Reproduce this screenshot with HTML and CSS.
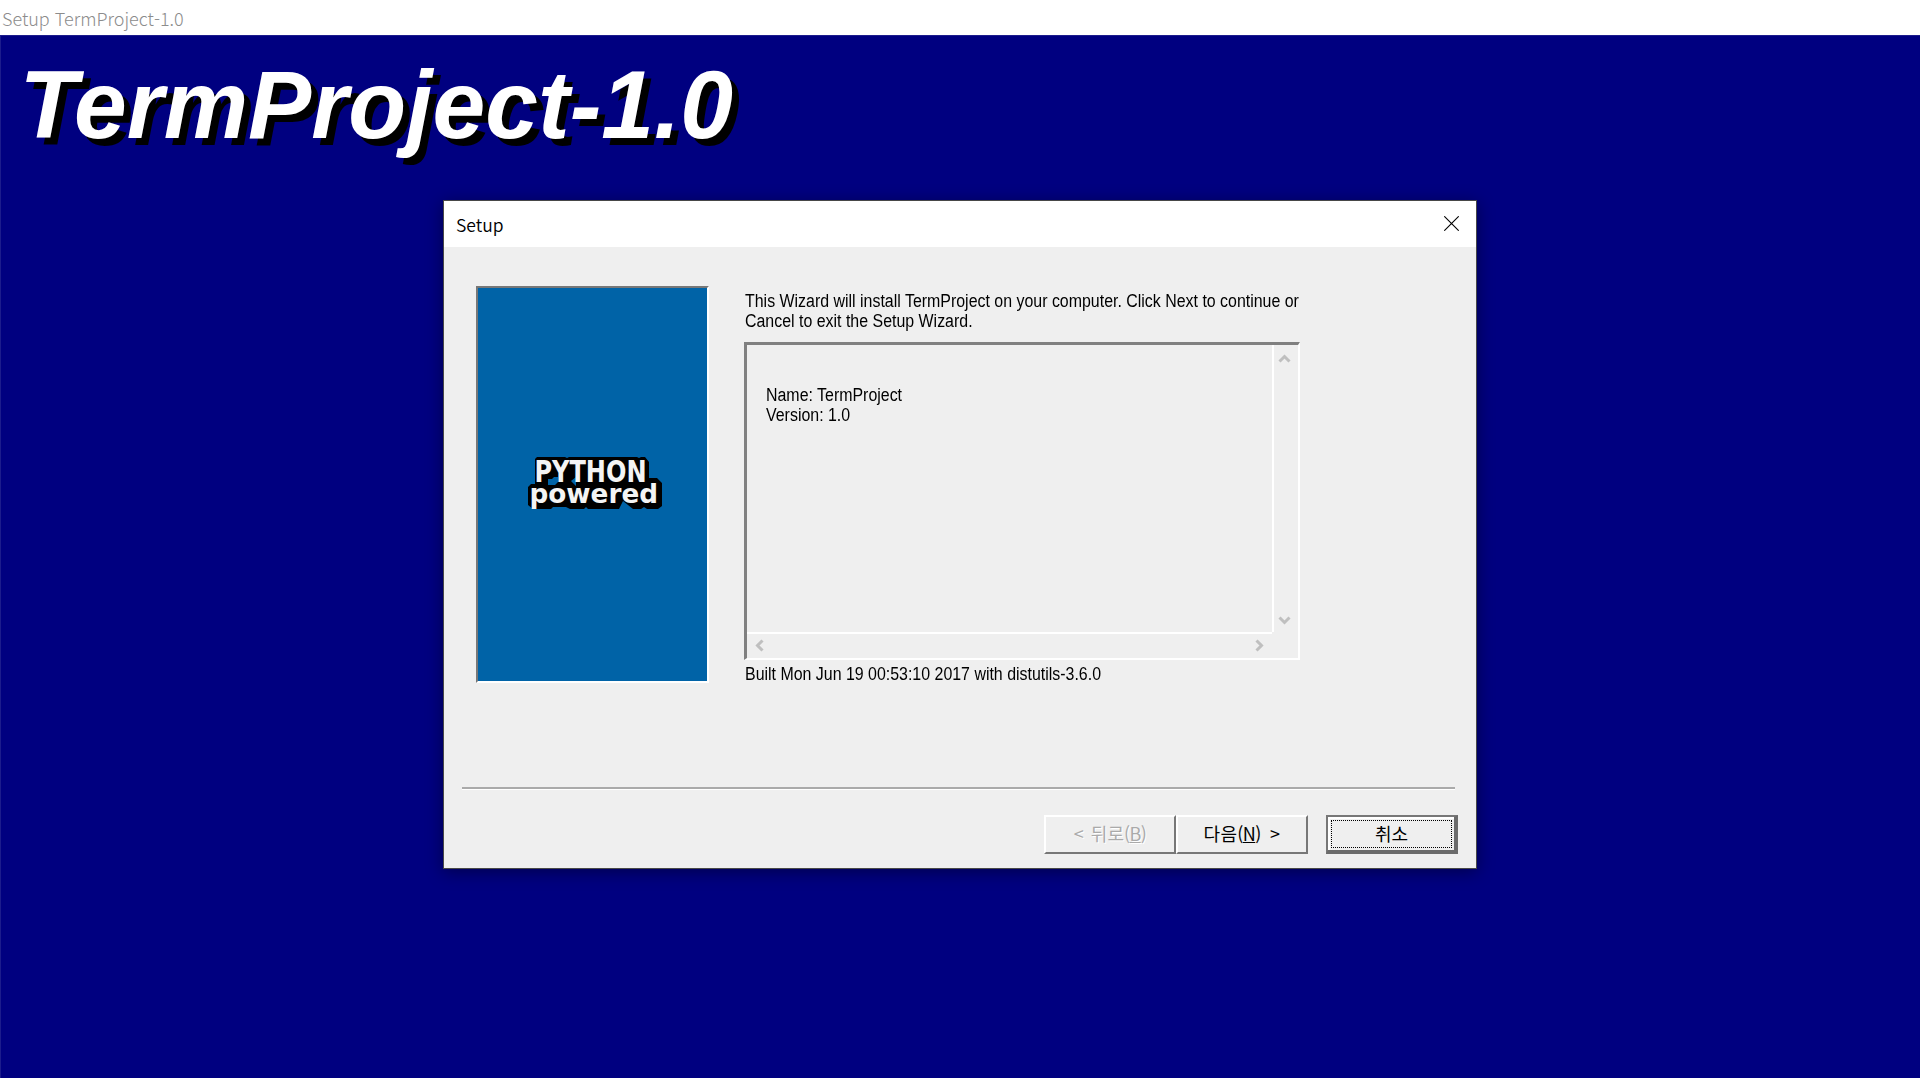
FILE: index.html
```html
<!DOCTYPE html>
<html lang="ko">
<head>
<meta charset="utf-8">
<title>Setup TermProject-1.0</title>
<link rel="stylesheet" href="styles.css">
</head>
<body>
<header class="titlebar"><span class="titlebar-text">Setup TermProject-1.0</span></header>
<main class="backdrop">
  <h1 class="product">TermProject-1.0</h1>
  <section class="dialog">
    <div class="caption">
      <span class="caption-text">Setup</span>
      <svg class="close" width="15" height="15" viewBox="0 0 15 15"><path d="M.3.3 14.7 14.7M14.7.3.3 14.7"/></svg>
    </div>
    <div class="content">
      <div class="banner">
        <svg class="logo" width="136" height="54" viewBox="527 456 136 54">
          <path d="M535 459l2-2h28l2 1 2-1h68l2 1 2-1h4l4 5v16h8l5 5v23l-4 3h-11l-3-2-3 2h-8l-10-8-4 8h-31l-2-2-2 2h-14l-4-2h-13l-2 2h-18l-5-4v-18l3-3h4z"/>
          <path class="gap" d="M548 479h4l2-2h4v5l-3 3h-7zM576 477v9l-5-5z"/>
          <text class="logo-top" x="534.5" y="482" textLength="112" lengthAdjust="spacingAndGlyphs">PYTHON</text>
          <text class="logo-bottom" x="529.5" y="503" textLength="128.5" lengthAdjust="spacingAndGlyphs">powered</text>
        </svg>
      </div>
      <div class="info">
        <p class="legacy intro"><span>This Wizard will install TermProject on your computer. Click Next to continue or</span><br><span>Cancel to exit the Setup Wizard.</span></p>
        <div class="details">
          <div class="legacy details-text"><span>Name: TermProject</span><br><span>Version: 1.0</span></div>
          <div class="vscroll">
            <svg width="13" height="11" viewBox="0 0 13 11"><path d="M1.5 8.5 6.5 3.5 11.5 8.5"/></svg>
            <svg width="13" height="11" viewBox="0 0 13 11"><path d="M1.5 2.5 6.5 7.5 11.5 2.5"/></svg>
          </div>
          <div class="hscroll">
            <svg width="11" height="13" viewBox="0 0 11 13"><path d="M8.5 1.5 3.5 6.5 8.5 11.5"/></svg>
            <svg width="11" height="13" viewBox="0 0 11 13"><path d="M2.5 1.5 7.5 6.5 2.5 11.5"/></svg>
          </div>
        </div>
        <p class="legacy built"><span>Built Mon Jun 19 00:53:10 2017 with distutils-3.6.0</span></p>
      </div>
    </div>
    <div class="separator"></div>
    <div class="actions">
      <button class="btn back" disabled>&lt; 뒤로<span class="key">(<u>B</u>)</span></button>
      <button class="btn next">다음<span class="key">(<u>N</u>)</span> &gt;</button>
      <button class="btn cancel"><span class="focus">취소</span></button>
    </div>
  </section>
</main>
</body>
</html>
```
FILE: styles.css
```css
* { box-sizing: border-box; }
body {
  margin: 0;
  height: 1078px;
  display: flex;
  flex-direction: column;
  overflow: hidden;
  background: #fff;
  font-family: "Noto Sans", "Noto Sans CJK KR", sans-serif;
}
.titlebar {
  height: 35px;
  padding: 6px 2px 0;
  font-size: 18px;
  line-height: 25px;
  color: #8c8c8c;
  white-space: nowrap;
}
.titlebar-text, .caption-text { font-family: "Noto Sans CJK KR", sans-serif; font-weight: 300; }
.backdrop {
  flex: 1;
  background: #000080;
  border-left: 1px solid #1c1c8c;
  border-top: 1px solid #1c1c8c;
}
.product {
  margin: 0;
  height: 164px;
  padding: 14px 0 0 19px;
  font: italic bold 97px/110px "Liberation Sans", Arial, sans-serif;
  color: #fff;
  text-shadow: 7px 7px 0 #000;
  white-space: nowrap;
  transform: scaleX(.978);
  transform-origin: 0 0;
}
.dialog {
  width: 1034px;
  height: 669px;
  margin-left: 442px;
  background: #efefef;
  border: 1px solid #484848;
  box-shadow: 0 3px 16px rgba(0, 0, 0, .4);
  display: flex;
  flex-direction: column;
}
.caption {
  height: 46px;
  background: #fff;
  display: flex;
  justify-content: space-between;
  padding: 11px 17px 0 12px;
  font-size: 17.5px;
  line-height: 25px;
  color: #000;
}
.caption-text { font-weight: 350; }
.close { margin-top: 4px; stroke: #000; stroke-width: 1.1; fill: none; }
.content { display: flex; height: 540px; padding: 39px 0 0 32px; }
.banner {
  width: 233px;
  height: 397px;
  background: #0063a7;
  border: 2px solid;
  border-color: #777 #fff #fff #777;
  padding: 168px 0 0 49px;
}
.logo { display: block; overflow: visible; }
.logo path { fill: #000; }
.logo path.gap { fill: #0063a7; }
.logo text { fill: #f4f4f4; font-family: "DejaVu Sans", sans-serif; font-weight: bold; }
.logo-top { font-size: 30px; }
.logo-bottom { font-size: 26px; }
.info { width: 555px; margin-left: 36px; }
.legacy { margin: 0; font: 18px/19.5px "Liberation Sans", Arial, sans-serif; color: #000; white-space: nowrap; }
.legacy span { display: inline-block; transform-origin: 0 50%; transform: scaleX(.885); }
.intro { height: 56px; padding: 6px 0 0; }
.details {
  height: 318px;
  margin-left: -1px;
  border: 3px solid;
  border-color: #808080 #fff #fff #808080;
  border-right-width: 2px;
  border-bottom-width: 2px;
  display: grid;
  grid-template: 287px 26px / 525px 26px;
}
.details-text { padding: 41px 0 0 19px; }
.details svg { fill: none; stroke: #bfbfbf; stroke-width: 3; display: block; }
.vscroll { border-left: 2px solid #fff; display: flex; flex-direction: column; justify-content: space-between; padding: 8px 0 6px 4px; }
.hscroll { border-top: 2px solid #fff; display: flex; justify-content: space-between; padding: 5px 7px 0 7px; }
.built { padding-top: 5px; }
.separator { height: 3px; margin: 0 21px 0 18px; border-top: 2px solid #aaa; border-bottom: 1px solid #fff; }
.actions { display: flex; padding: 25px 0 0 600px; }
.btn {
  width: 132px;
  height: 39px;
  padding: 0 0 3px;
  background: #efefef;
  border: 2px solid;
  border-color: #fff #777 #777 #fff;
  font: 400 18px/22px "Noto Sans CJK KR", sans-serif;
  color: #000;
  word-spacing: 2px;
}
.next { word-spacing: 4px; letter-spacing: .3px; }
.back { color: #aaa; text-shadow: 1px 1px 0 #fff; }
.key { letter-spacing: -.6px; }
.cancel { margin-left: 18px; border-width: 2px 4px 4px 2px; border-color: #777 #6b6b6b #6b6b6b #777; padding: 3px 2px 2px 3px; box-shadow: inset 2px 2px #fff; }
.focus { display: flex; align-items: center; justify-content: center; width: 100%; height: 100%; padding-bottom: 2px; border: 1px dotted #000; }
```
